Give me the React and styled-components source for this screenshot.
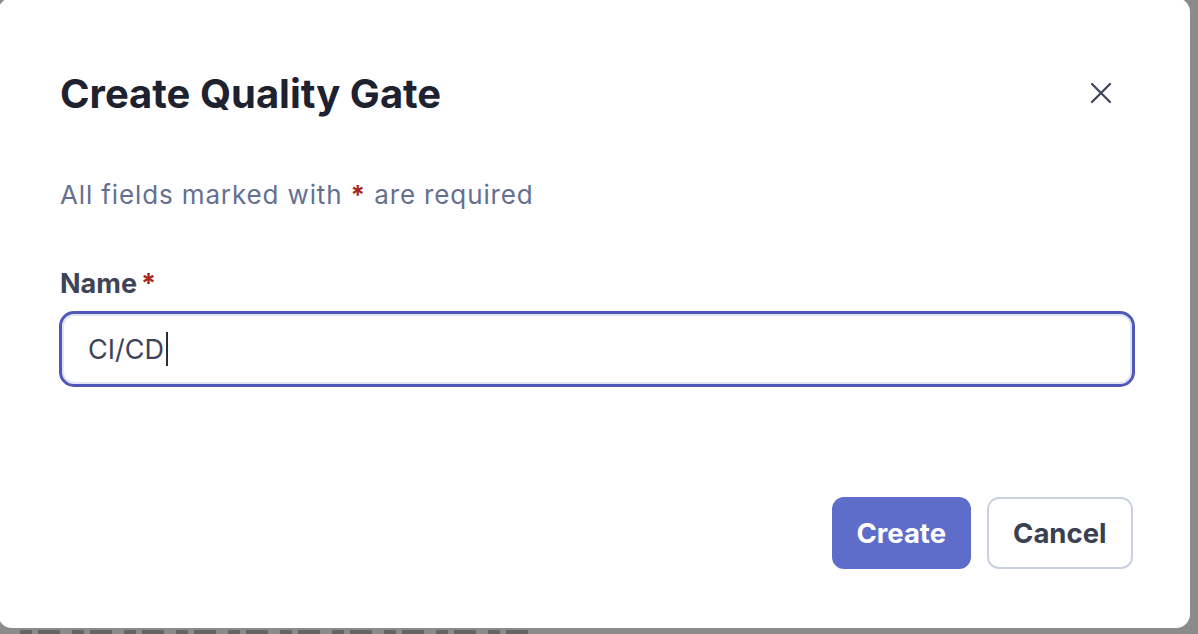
import React from "react";
import styled, { createGlobalStyle } from "styled-components";

const Global = createGlobalStyle`
  html, body { margin: 0; padding: 0; }
  body {
    background: #8b8b8b;
    font-family: Inter, "Noto Sans", sans-serif;
    overflow: hidden;
    height: 634px;
  }
`;

const Backdrop = styled.div`
  position: fixed;
  inset: 0;
  background: #8b8b8b;
`;

const BackStrip = styled.div`
  position: absolute;
  left: 20px;
  top: 630px;
  width: 520px;
  height: 4px;
  background: repeating-linear-gradient(
    90deg,
    #4a4a4a 0 12px,
    transparent 12px 18px,
    #4a4a4a 18px 40px,
    transparent 40px 52px
  );
  opacity: 0.6;
`;

const Dialog = styled.div`
  position: absolute;
  left: -2px;
  top: -2px;
  width: 1192px;
  height: 630px;
  box-sizing: border-box;
  background: #fff;
  border-radius: 14px;
  padding: 0 55px 0 61px;
  display: flex;
  flex-direction: column;
`;

const Header = styled.div`
  display: flex;
  align-items: center;
  justify-content: space-between;
  padding-top: 70px;
  height: 50px;
`;

const Title = styled.h1`
  margin: 0 0 0 1px;
  font-size: 40px;
  font-weight: 700;
  color: #1e2230;
`;

const CloseButton = styled.button`
  border: none;
  background: none;
  padding: 0;
  margin-right: 20px;
  width: 28px;
  height: 28px;
  display: flex;
  align-items: center;
  justify-content: center;
  color: #3e4357;
  cursor: pointer;
`;

const Hint = styled.p`
  margin: 61px 0 0 1px;
  font-size: 26px;
  letter-spacing: 0.87px;
  color: #65708f;
`;

const Star = styled.span`
  color: #a8281c;
  font-weight: 700;
`;

const Label = styled.label`
  margin: 57px 0 0 1px;
  font-size: 27px;
  font-weight: 700;
  color: #3e4357;
  display: flex;
  gap: 4px;
`;

const Input = styled.div`
  margin-top: 11px;
  height: 76px;
  box-sizing: border-box;
  border: 3px solid #4f58b8;
  border-radius: 15px;
  box-shadow: inset 0 0 0 2px #e2e5f3;
  display: flex;
  align-items: center;
  padding-left: 26px;
  font-size: 27px;
  color: #3e4357;
`;

const Caret = styled.span`
  display: inline-block;
  width: 2px;
  height: 34px;
  background: #2a2e3b;
  margin-left: 2px;
`;

const Footer = styled.div`
  margin-top: 110px;
  display: flex;
  justify-content: flex-end;
  gap: 16px;
  padding-right: 2px;
`;

const Button = styled.button`
  height: 72px;
  box-sizing: border-box;
  padding: 0 ${(p) => (p.$primary ? "22.5px" : "24.5px")};
  border-radius: 12px;
  border: 2px solid ${(p) => (p.$primary ? "#5f6dca" : "#c9d1e1")};
  background: ${(p) => (p.$primary ? "#5f6dca" : "#fff")};
  color: ${(p) => (p.$primary ? "#fff" : "#3a3f52")};
  font-family: Inter, sans-serif;
  font-size: 27.5px;
  font-weight: 700;
`;

export default function App() {
  return (
    <>
      <Global />
      <Backdrop>
        <BackStrip />
        <Dialog>
          <Header>
            <Title>Create Quality Gate</Title>
            <CloseButton aria-label="Close">
              <svg width="22" height="22" viewBox="0 0 22 22">
                <path d="M2 2 L20 20 M20 2 L2 20" stroke="currentColor" strokeWidth="2.2" strokeLinecap="round" />
              </svg>
            </CloseButton>
          </Header>
          <Hint>
            All fields marked with <Star>*</Star> are required
          </Hint>
          <Label>
            Name<Star>*</Star>
          </Label>
          <Input>
            CI/CD<Caret />
          </Input>
          <Footer>
            <Button $primary>Create</Button>
            <Button>Cancel</Button>
          </Footer>
        </Dialog>
      </Backdrop>
    </>
  );
}
